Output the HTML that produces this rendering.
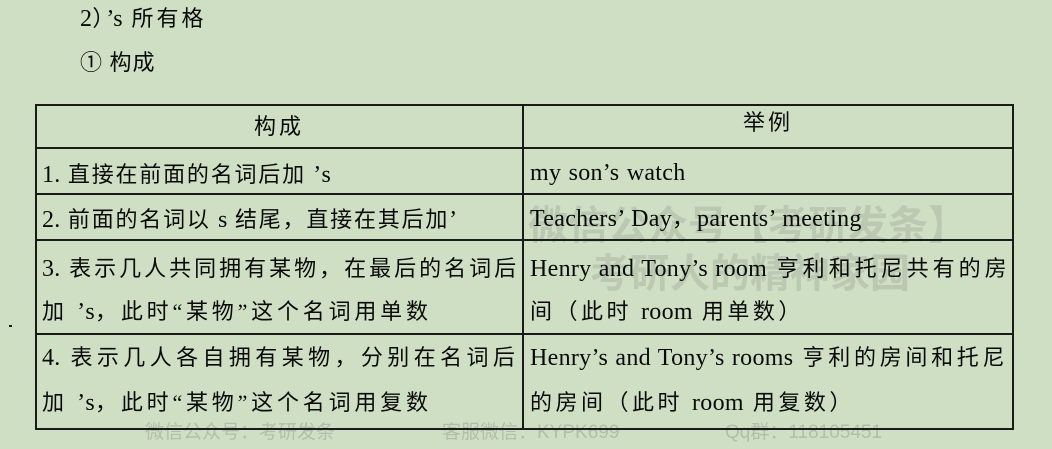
<!DOCTYPE html>
<html><head><meta charset="utf-8"><style>
html,body{margin:0;padding:0;}
body{width:1052px;height:449px;background:#cfdfc4;position:relative;overflow:hidden;font-family:"Liberation Serif","Noto Sans CJK SC",serif;color:#0a0a0a;font-size:22px;}
.t{position:absolute;white-space:nowrap;line-height:1;letter-spacing:3px;}
.e{letter-spacing:0.3px;font-size:24px;word-spacing:1px;}
.h{position:absolute;background:#1a1a1a;}
.wm{position:absolute;white-space:nowrap;color:rgba(150,160,150,0.35);font-family:"Noto Sans CJK SC",sans-serif;font-weight:bold;line-height:1;}
.ft{position:absolute;white-space:nowrap;color:rgba(140,150,140,0.45);font-family:"Liberation Sans","Noto Sans CJK SC",sans-serif;font-size:19px;line-height:1;}
</style></head><body>
<div class="wm" style="left:528px;top:202px;font-size:40px;">微信公众号【考研发条】</div>
<div class="wm" style="left:590px;top:250px;font-size:40px;">考研人的精神家园</div>
<div class="ft" style="left:145px;top:423px;">微信公众号：考研发条</div>
<div class="ft" style="left:442px;top:423px;">客服微信：KYPK699</div>
<div class="ft" style="left:725px;top:423px;">Qq群：118105451</div>

<div class="t" style="left:80px;top:7px;letter-spacing:3px;"><span class="e">2</span>）<span class="e">’s</span> 所有格</div>
<div class="t" style="left:80px;top:52px;letter-spacing:1px;">① 构成</div>

<div class="h" style="left:35px;top:104px;width:979px;height:2px;"></div>
<div class="h" style="left:35px;top:147px;width:979px;height:2px;"></div>
<div class="h" style="left:35px;top:193px;width:979px;height:2px;"></div>
<div class="h" style="left:35px;top:239px;width:979px;height:2px;"></div>
<div class="h" style="left:35px;top:333px;width:979px;height:2px;"></div>
<div class="h" style="left:35px;top:428px;width:979px;height:2px;"></div>
<div class="h" style="left:35px;top:104px;width:2px;height:326px;"></div>
<div class="h" style="left:522px;top:104px;width:2px;height:326px;"></div>
<div class="h" style="left:1012px;top:104px;width:2px;height:326px;"></div>
<div class="h" style="left:9px;top:325px;width:3px;height:2px;"></div>

<div class="t" style="left:254px;top:116px;">构成</div>
<div class="t" style="left:743px;top:112px;">举例</div>

<div class="t" style="left:42px;top:163px;letter-spacing:1.8px;"><span class="e">1.</span> 直接在前面的名词后加 <span class="e">’s</span></div>
<div class="t" style="left:530px;top:161px;"><span class="e">my son’s watch</span></div>

<div class="t" style="left:42px;top:208px;letter-spacing:1.8px;"><span class="e">2.</span> 前面的名词以 <span class="e">s</span> 结尾，直接在其后加<span class="e">’</span></div>
<div class="t" style="left:530px;top:207px;"><span class="e">Teachers’ Day</span>，<span class="e">parents’ meeting</span></div>

<div class="t" style="left:42px;top:257px;"><span class="e">3.</span> 表示几人共同拥有某物，在最后的名词后</div>
<div class="t" style="left:42px;top:300px;letter-spacing:3.8px;">加 <span class="e">’s</span>，此时“某物”这个名词用单数</div>
<div class="t" style="left:530px;top:257px;letter-spacing:4px;"><span class="e">Henry and Tony’s room</span> 亨利和托尼共有的房</div>
<div class="t" style="left:530px;top:300px;letter-spacing:3.5px;">间（此时 <span class="e">room</span> 用单数）</div>

<div class="t" style="left:42px;top:346px;letter-spacing:4.4px;"><span class="e">4.</span> 表示几人各自拥有某物，分别在名词后</div>
<div class="t" style="left:42px;top:391px;letter-spacing:3.8px;">加 <span class="e">’s</span>，此时“某物”这个名词用复数</div>
<div class="t" style="left:530px;top:346px;letter-spacing:3.7px;"><span class="e">Henry’s and Tony’s rooms</span> 亨利的房间和托尼</div>
<div class="t" style="left:530px;top:391px;letter-spacing:3.5px;">的房间（此时 <span class="e">room</span> 用复数）</div>
</body></html>
